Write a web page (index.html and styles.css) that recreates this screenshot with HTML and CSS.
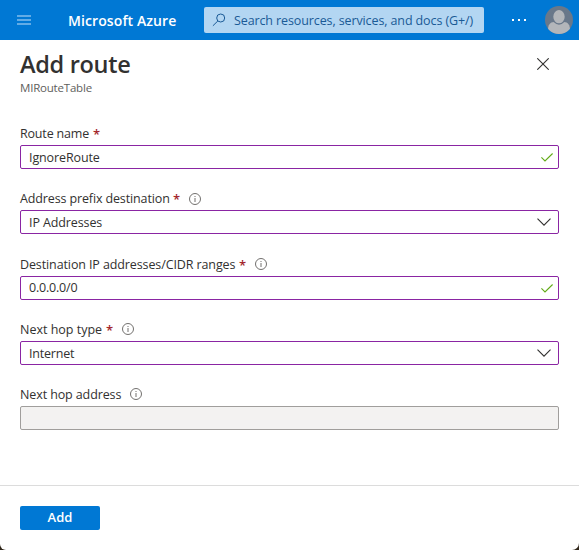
FILE: index.html
```html
<!DOCTYPE html>
<html lang="en">
<head>
<meta charset="utf-8">
<title>Add route - Microsoft Azure</title>
<link rel="stylesheet" href="styles.css">
</head>
<body>
<svg class="defs" width="0" height="0" aria-hidden="true">
  <symbol id="info" viewBox="0 0 12 12"><circle cx="6" cy="6" r="5.5" fill="none" stroke="#72706e"/><path d="M6 5v4M6 3v1" stroke="#72706e" fill="none"/></symbol>
  <symbol id="check" viewBox="0 0 12 9"><path d="M.4 4.4 4 8 11.6.5" fill="none" stroke="#62aa17" stroke-width="1.1"/></symbol>
  <symbol id="chevron" viewBox="0 0 14 8"><path d="M.5.6 7 7.1 13.5.6" fill="none" stroke="#323130" stroke-width="1.1"/></symbol>
</svg>
<div class="window">
  <header class="topbar">
    <svg class="menu" width="14" height="11" viewBox="0 0 14 11"><path d="M0 1h14M0 5h14M0 9h14" stroke="#83bdec" stroke-width="1.6"/></svg>
    <span class="brand">Microsoft Azure</span>
    <div class="search">
      <svg width="14" height="14" viewBox="0 0 14 14" fill="none" stroke="#1a5a96"><circle cx="8.7" cy="5" r="4"/><path d="M5.9 7.9.9 12.8"/></svg>
      <span>Search resources, services, and docs (G+/)</span>
    </div>
    <svg class="more" width="15" height="2" viewBox="0 0 15 2" fill="#fff"><path d="M0 0h2v2H0zM6 0h2v2H6zM12 0h2v2h-2z"/></svg>
    <svg class="avatar" width="28" height="28" viewBox="0 0 28 28"><clipPath id="face"><circle cx="14" cy="14" r="14"/></clipPath><g clip-path="url(#face)"><path fill="#69788a" d="M0 0h28v28H0z"/><path d="M3 24c0-5 2-8 6-8h10c4 0 6 3 6 8v4H3z" fill="#b3b6ba"/><ellipse cx="14" cy="10.7" rx="6.4" ry="7.3" fill="#b3b6ba" stroke="#69788a" stroke-width="1.4"/></g></svg>
  </header>
  <div class="title">
    <div>
      <h1>Add route</h1>
      <p>MIRouteTable</p>
    </div>
    <svg class="close" width="12" height="12" viewBox="0 0 12 12"><path d="m.3.3 11.4 11.4M11.7.3.3 11.7" stroke="#323130" stroke-width="1.1"/></svg>
  </div>
  <main class="form">
    <div class="field">
      <div class="label"><span class="t-name">Route name</span><b>*</b></div>
      <div class="input"><span class="v-name">IgnoreRoute</span><svg class="check"><use href="#check"/></svg></div>
    </div>
    <div class="field later">
      <div class="label"><span class="t-prefix">Address prefix destination</span><b>*</b><svg class="info"><use href="#info"/></svg></div>
      <div class="input"><span class="v-prefix">IP Addresses</span><svg class="chevron"><use href="#chevron"/></svg></div>
    </div>
    <div class="field">
      <div class="label"><span class="t-range">Destination IP addresses/CIDR ranges</span><b>*</b><svg class="info"><use href="#info"/></svg></div>
      <div class="input"><span class="v-range">0.0.0.0/0</span><svg class="check"><use href="#check"/></svg></div>
    </div>
    <div class="field">
      <div class="label"><span class="t-type">Next hop type</span><b>*</b><svg class="info"><use href="#info"/></svg></div>
      <div class="input"><span class="v-type">Internet</span><svg class="chevron"><use href="#chevron"/></svg></div>
    </div>
    <div class="field">
      <div class="label"><span class="t-hop">Next hop address</span><svg class="info"><use href="#info"/></svg></div>
      <div class="input disabled"></div>
    </div>
  </main>
  <footer class="actions"><button type="button">Add</button></footer>
</div>
</body>
</html>
```
FILE: styles.css
```css
* { box-sizing: border-box; }
html { background: #30261a; }
body { margin: 0; font: 12.5px/18px "Open Sans", "Noto Sans", sans-serif; letter-spacing: -.11px; color: #323130; }
svg { display: block; flex: none; }
.defs { position: absolute; }
.window { height: 550px; display: flex; flex-direction: column; background: #fff; border-radius: 0 0 7px 6px; overflow: hidden; white-space: nowrap; }
.topbar { height: 40px; flex: none; display: flex; align-items: center; background: #0078d4; color: #fff; padding-left: 17px; }
.brand { width: 136px; margin-left: 37px; padding-top: 1px; font-size: 14px; font-weight: 600; letter-spacing: .1px; }
.search { width: 280px; height: 26px; display: flex; align-items: center; gap: 8px; padding-left: 8px; border-radius: 2px; background: #b3d6f2; color: #1a5a96; letter-spacing: -.11px; }
.search span { padding-top: 1px; }
.more { margin-left: 28px; }
.avatar { margin-left: 18px; }
.title { height: 84px; flex: none; display: flex; justify-content: space-between; padding: 8px 30px 0 20px; }
h1 { margin: 0; font-size: 23.5px; line-height: 32px; font-weight: 600; letter-spacing: -.3px; }
.title p { margin: -1px 0 0; font-size: 11.5px; letter-spacing: -.2px; color: #605e5c; }
.close { margin-top: 10px; }
.form { flex: none; height: 361px; padding: 0 20px; }
.field { height: 65px; }
.later { height: 66px; }
.label { height: 21px; display: flex; align-items: flex-start; }
.label span, .label b { padding-top: 1px; }
.label b { width: 7px; margin-left: 4px; color: #a4262c; font-size: 13px; font-weight: 600; }
.info { width: 12px; height: 12px; margin: 3px 0 0 9px; }
.later .info { margin-top: 4px; }
.t-name { width: 69px; letter-spacing: -.18px; }
.t-prefix { width: 149px; letter-spacing: -.13px; }
.t-range { width: 215px; }
.t-type { width: 82px; letter-spacing: 0; }
.t-hop { width: 101px; }
.v-range, .v-type { letter-spacing: -.2px; }
.input { height: 24px; display: flex; align-items: center; justify-content: space-between; padding: 0 5px 0 8px; border: 1px solid #8a25a3; border-radius: 2px; }
.input span { padding-top: 2px; }
.input .v-range { padding: 0; }
.disabled { background: #f3f2f1; border-color: #a09e9c; }
.check { width: 12px; height: 9px; }
.chevron { width: 14px; height: 8px; margin-right: 2px; }
.actions { flex: 1; padding: 20px; border-top: 1px solid #dcdcdc; }
button { display: block; width: 80px; height: 24px; padding: 0 0 2px; border: 0; border-radius: 2px; background: #0078d4; color: #fff; font: 600 13px/22px "Open Sans", "Noto Sans", sans-serif; }
```
